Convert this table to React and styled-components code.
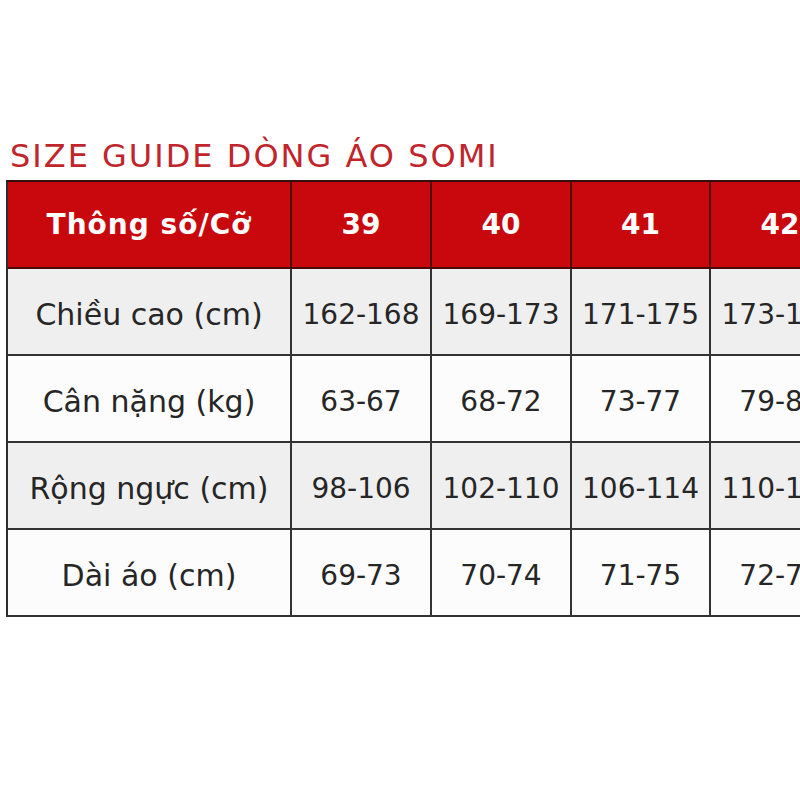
import React from "react";
import styled, { createGlobalStyle } from "styled-components";

const Global = createGlobalStyle`
  html, body { margin: 0; padding: 0; background: #ffffff; }
  body { font-family: "DejaVu Sans", "Liberation Sans", sans-serif; }
`;

const Page = styled.div`
  width: 800px;
  height: 800px;
  overflow: hidden;
  background: #ffffff;
  padding: 136px 0 0 6px;
  box-sizing: border-box;
`;

const Title = styled.h1`
  margin: 0 0 0 4px;
  height: 44px;
  font-family: "DejaVu Sans", sans-serif;
  font-weight: 400;
  font-size: 32px;
  line-height: 40px;
  letter-spacing: 2px;
  color: #c1252b;
  white-space: nowrap;
`;

const Table = styled.div`
  display: grid;
  grid-template-columns: 284px 140px 140px 139px 140px;
  grid-auto-rows: 87px;
  width: max-content;
  border-left: 2px solid #2e2e2e;
  border-top: 2px solid #3a0d0d;
`;

const HeadCell = styled.div`
  display: flex;
  align-items: center;
  justify-content: center;
  box-sizing: border-box;
  background: #c9080e;
  border-right: 2px solid #4a0a0a;
  border-bottom: 2px solid #4a0a0a;
  color: #ffffff;
  font-family: "DejaVu Sans", sans-serif;
  font-weight: 700;
  font-size: 28px;
  letter-spacing: ${(p) => (p.$label ? "1px" : "0")};
  white-space: nowrap;
`;

const Cell = styled.div`
  display: flex;
  align-items: center;
  justify-content: center;
  padding-top: 6px;
  box-sizing: border-box;
  background: ${(p) => (p.$shade ? "#efefef" : "#fcfcfc")};
  border-right: 2px solid #333333;
  border-bottom: 2px solid #333333;
  color: #262626;
  font-family: "DejaVu Sans", sans-serif;
  font-size: ${(p) => (p.$label ? "30px" : "28px")};
  white-space: nowrap;
`;

const header = ["Thông số/Cỡ", "39", "40", "41", "42"];
const rows = [
  ["Chiều cao (cm)", "162-168", "169-173", "171-175", "173-177"],
  ["Cân nặng (kg)", "63-67", "68-72", "73-77", "79-83"],
  ["Rộng ngực (cm)", "98-106", "102-110", "106-114", "110-118"],
  ["Dài áo (cm)", "69-73", "70-74", "71-75", "72-76"],
];

export default function App() {
  return (
    <>
      <Global />
      <Page>
        <Title>SIZE GUIDE DÒNG ÁO SOMI</Title>
        <Table>
          {header.map((h, i) => (
            <HeadCell key={h} $label={i === 0}>
              {h}
            </HeadCell>
          ))}
          {rows.map((r, ri) =>
            r.map((c, ci) => (
              <Cell key={ri + "-" + ci} $label={ci === 0} $shade={ri % 2 === 0}>
                {c}
              </Cell>
            ))
          )}
        </Table>
      </Page>
    </>
  );
}
